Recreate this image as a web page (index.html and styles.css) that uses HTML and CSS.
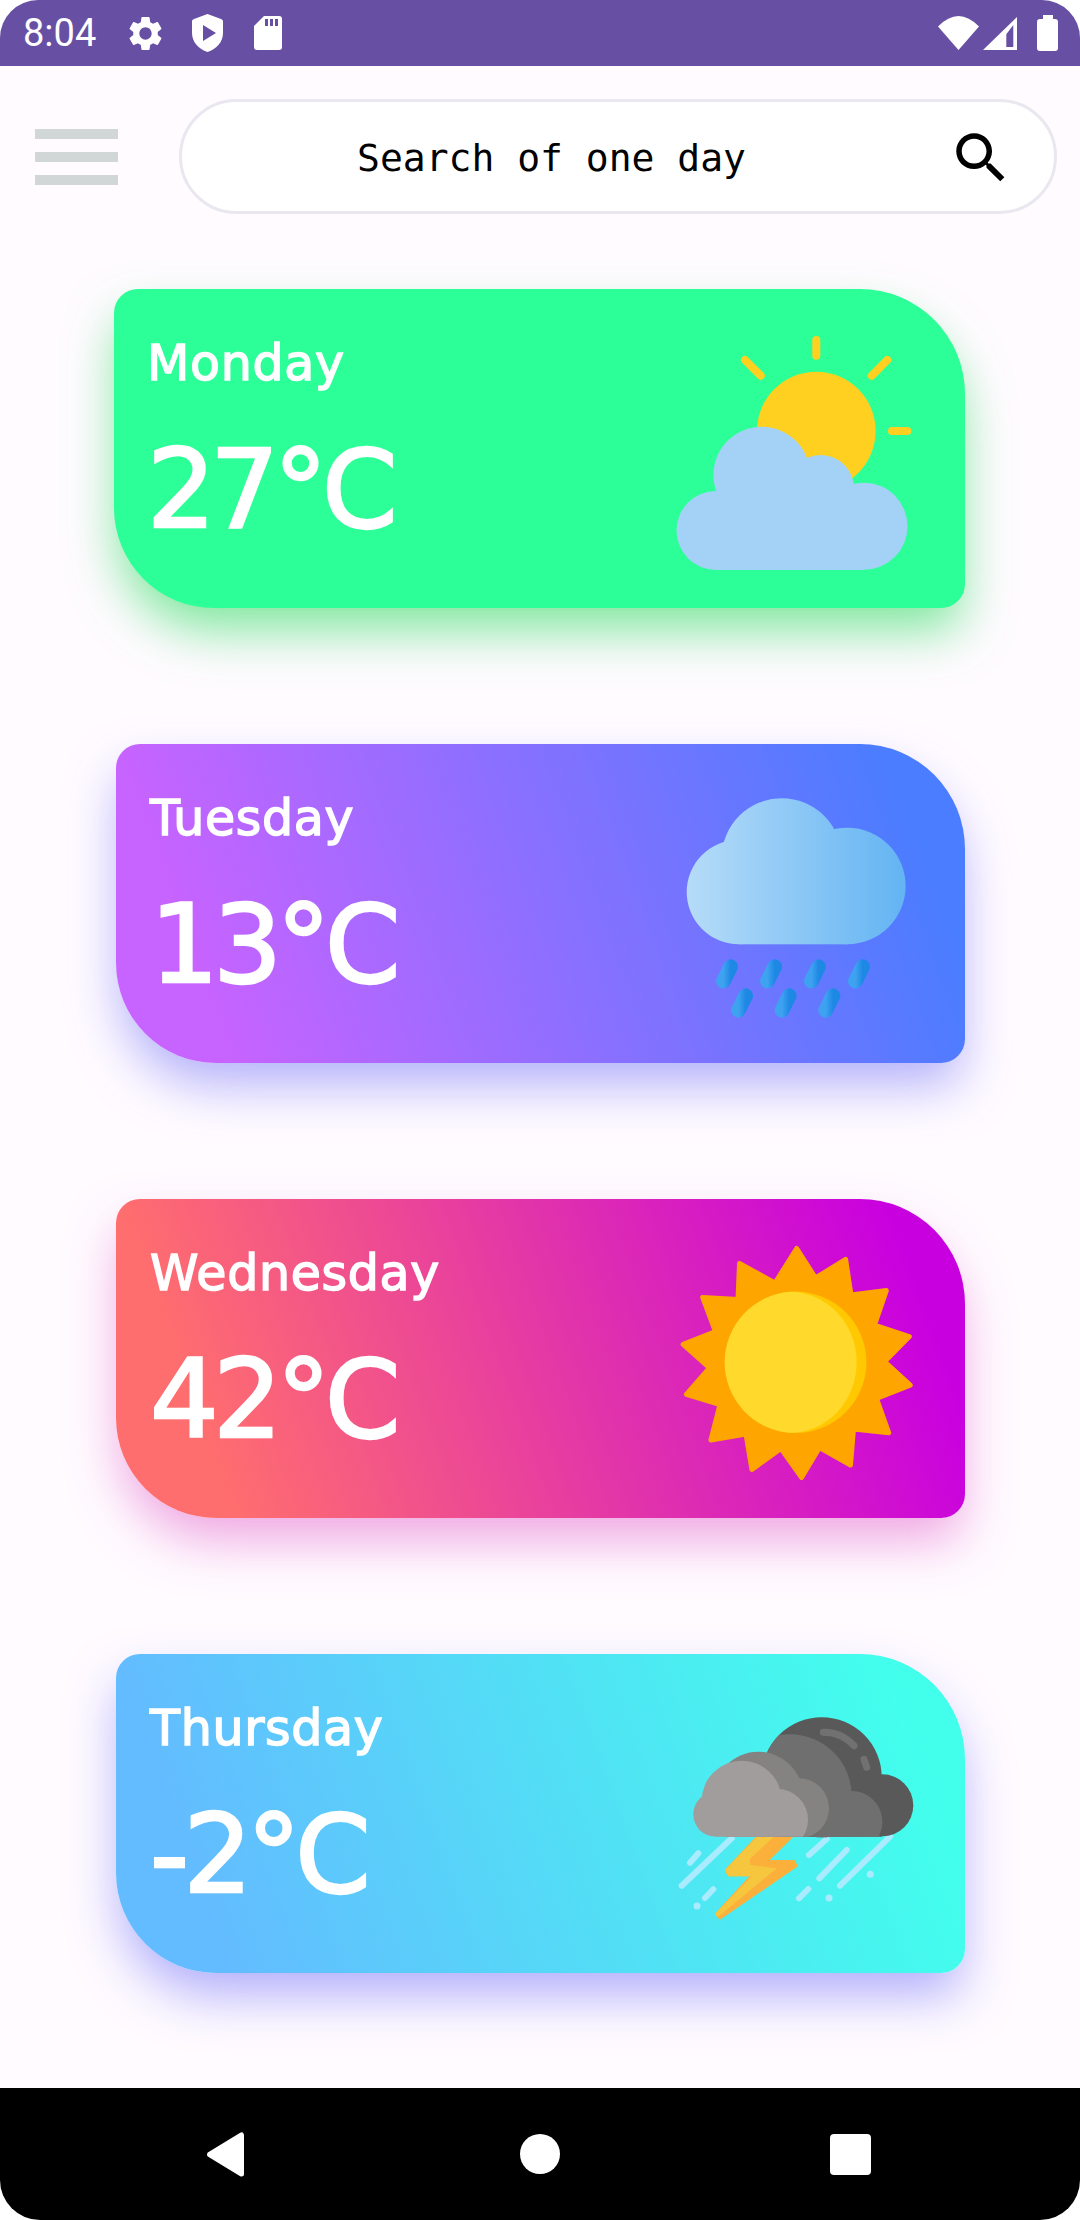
FILE: index.html
```html
<!DOCTYPE html>
<html lang="en">
<head>
  <meta charset="UTF-8">
  <title>Weather</title>
  <link rel="stylesheet" href="styles.css">
</head>
<body>
  <div class="phone">
    <div class="status-bar">
      <span class="clock">8:04</span>
      <svg class="icon-gear" viewBox="0 0 24 24"><path fill="#fff" d="M19.14 12.94c.04-.3.06-.61.06-.94 0-.32-.02-.64-.07-.94l2.03-1.58c.18-.14.23-.41.12-.61l-1.92-3.32c-.12-.22-.37-.29-.59-.22l-2.39.96c-.5-.38-1.03-.7-1.62-.94l-.36-2.54c-.04-.24-.24-.41-.48-.41h-3.84c-.24 0-.43.17-.47.41l-.36 2.54c-.59.24-1.13.57-1.62.94l-2.39-.96c-.22-.08-.47 0-.59.22L2.74 8.87c-.12.21-.08.47.12.61l2.03 1.58c-.05.3-.09.63-.09.94s.02.64.07.94l-2.03 1.58c-.18.14-.23.41-.12.61l1.92 3.32c.12.22.37.29.59.22l2.39-.96c.5.38 1.03.7 1.62.94l.36 2.54c.05.24.24.41.48.41h3.84c.24 0 .44-.17.47-.41l.36-2.54c.59-.24 1.13-.56 1.62-.94l2.39.96c.22.08.47 0 .59-.22l1.92-3.32c.12-.22.07-.47-.12-.61l-2.01-1.58zM12 15.6c-1.98 0-3.6-1.62-3.6-3.6s1.62-3.6 3.6-3.6 3.6 1.62 3.6 3.6-1.62 3.6-3.6 3.6z"/></svg>
      <svg class="icon-shield" viewBox="0 0 31 38"><path fill="#fff" fill-rule="evenodd" d="M15.5 0L29 5c1.300.5 2 1.300 2 2.700V19c0 9-6.500 16-15.500 19C6.500 35 0 28 0 19V7.700C0 6.300.7 5.500 2 5zM11 11v16l13-8z"/></svg>
      <svg class="icon-sd" viewBox="0 0 28 34">
        <path fill="#fff" d="M10 0H25a3 3 0 0 1 3 3V31a3 3 0 0 1-3 3H3a3 3 0 0 1-3-3V10Z"/>
        <path fill="#6750a4" d="M11 3h3v7h-3zM16 3h3v7h-3zM21 3h3v7h-3z"/>
      </svg>
      <div class="status-right">
        <svg class="icon-wifi" viewBox="0 0 41 34"><path fill="#fff" d="M20.500 34L0 10.500Q20.500-10.500 41 10.500Z"/></svg>
        <svg class="icon-signal" viewBox="0 0 34 33"><path fill="#fff" fill-rule="evenodd" d="M34 0V33H0ZM30.300 8L23.300 17.300V30H30.300Z"/></svg>
        <svg class="icon-battery" viewBox="0 0 21 36"><path fill="#fff" d="M6 0H16V4H18a3 3 0 0 1 3 3V33a3 3 0 0 1-3 3H3a3 3 0 0 1-3-3V7a3 3 0 0 1 3-3H6Z"/></svg>
      </div>
    </div>

    <main class="content">
      <header class="top-row">
        <div class="menu">
          <span></span>
          <span></span>
          <span></span>
        </div>
        <div class="search">
          <span class="search-text">Search of one day</span>
          <svg class="icon-search" viewBox="0 0 24 24"><path d="M15.500 14h-.79l-.28-.27C15.410 12.590 16 11.110 16 9.500 16 5.910 13.090 3 9.500 3S3 5.910 3 9.500 5.910 16 9.500 16c1.610 0 3.090-.59 4.230-1.570l.27.28v.79l5 4.990L20.490 19l-4.990-5zm-6 0C7.010 14 5 11.990 5 9.500S7.010 5 9.500 5 14 7.010 14 9.500 11.990 14 9.500 14z"/></svg>
        </div>
      </header>

      <section class="cards">
        <article class="card card-mon">
          <div class="card-text">
            <div class="day">Monday</div>
            <div class="temp">27°C</div>
          </div>
          <svg class="weather" viewBox="0 0 240 240">
            <circle cx="140.300" cy="100" r="59.300" fill="#ffd020"/>
            <g stroke="#ffd020" stroke-width="8" stroke-linecap="round">
              <path d="M140.300 9V24.700M69 29L84.700 44.700M211.300 29L195.700 44.700M216 100H231.300"/>
            </g>
            <g fill="#a3d2f6">
              <circle cx="40" cy="199.500" r="39.500"/>
              <circle cx="188" cy="195.300" r="43.500"/>
              <circle cx="85.700" cy="144" r="48.300"/>
              <circle cx="144.700" cy="157.300" r="33.300"/>
              <rect x="40" y="170" width="148" height="69"/>
            </g>
          </svg>
        </article>

        <article class="card card-tue">
          <div class="card-text">
            <div class="day">Tuesday</div>
            <div class="temp">13°C</div>
          </div>
          <svg class="weather" viewBox="0 0 240 240">
            <defs>
              <linearGradient id="rainCloud" gradientUnits="userSpaceOnUse" x1="10" y1="0" x2="230" y2="0">
                <stop offset="0" stop-color="#b6dcf8"/>
                <stop offset="1" stop-color="#63b4f3"/>
              </linearGradient>
              <linearGradient id="drop" x1="0" y1="0" x2="1" y2="0">
                <stop offset="0" stop-color="#3ea2f0"/>
                <stop offset="1" stop-color="#1e88e5"/>
              </linearGradient>
            </defs>
            <g fill="url(#rainCloud)">
              <circle cx="105.700" cy="72.300" r="60"/>
              <circle cx="171.300" cy="100" r="58.300"/>
              <circle cx="63" cy="106" r="52.300"/>
              <rect x="63" y="90" width="108.300" height="68.300"/>
            </g>
            <g fill="none" stroke="url(#drop)" stroke-width="14.700" stroke-linecap="round">
              <path d="M54.700 180.700L47.400 195.100"/>
              <path d="M98.700 180.700L91.400 195.100"/>
              <path d="M142.700 180.700L135.400 195.100"/>
              <path d="M186.700 180.700L179.400 195.100"/>
              <path d="M69.700 209.700L62.400 224.300"/>
              <path d="M113.300 209.700L106 224.300"/>
              <path d="M157 209.700L149.700 224.300"/>
            </g>
          </svg>
        </article>

        <article class="card card-wed">
          <div class="card-text">
            <div class="day">Wednesday</div>
            <div class="temp">42°C</div>
          </div>
          <svg class="weather" viewBox="0 0 240 240">
            <polygon fill="#ffa500" stroke="#ffa500" stroke-width="5" stroke-linejoin="round" points="120.700,7.500 139.500,37 169.600,18.500 175,54 210.300,49.600 198.500,84 233.300,95.600 208.500,120.700 234.200,144.200 200.500,157.500 212.700,191.800 177.500,188 174.500,224.100 143.500,206.500 125.600,236.500 105,207.500 75.900,228.400 70,193 34.900,199 44,163.500 10.400,153.300 33.500,127 7.200,103.400 39.500,90.500 26.700,56.400 62,58.500 63.500,22.500 99,42"/>
            <circle cx="119.700" cy="121.300" r="70.700" fill="#ffc800"/>
            <path fill="#ffd92b" d="M114 50.800A70.700 70.700 0 0 0 114 191.800A66.700 70.500 0 0 0 114 50.800Z"/>
          </svg>
        </article>

        <article class="card card-thu">
          <div class="card-text">
            <div class="day">Thursday</div>
            <div class="temp">-2°C</div>
          </div>
          <svg class="weather" viewBox="0 0 240 240">
            <defs>
              <clipPath id="cloudBottom"><rect x="0" y="0" width="240" height="140.700"/></clipPath>
              <clipPath id="darkCloud">
                <circle cx="145.700" cy="81.300" r="60"/>
                <circle cx="206.300" cy="109.300" r="31"/>
                <rect x="30" y="90" width="176" height="50.700"/>
              </clipPath>
            </defs>
            <g fill="none" stroke="#a9ebff" stroke-width="6" stroke-linecap="round">
              <path d="M55.700 142.300L5.700 189.700M22.300 157.300L14 166.700M37.300 193.300L29 202"/>
              <path d="M150.700 143L133 159M170.700 154L143.300 182.300M214 140.700L164 189.700M132.300 193L123 202.300"/>
            </g>
            <g fill="#a9ebff">
              <circle cx="21" cy="210" r="3.500"/>
              <circle cx="153" cy="202" r="3.500"/>
              <circle cx="194.300" cy="178.300" r="3.500"/>
            </g>
            <polygon fill="#fbb03b" stroke="#fbb03b" stroke-width="2" stroke-linejoin="round" points="81,141 115.700,141 91.300,165 118,165 120.700,170 44,222.500 40,218 75.700,179.300 52.300,179.300 50,174"/>
            <polygon fill="#f7c63f" points="80.700,141 97.300,141 74,163 74,169 100.700,172.300 42,221 39,218 75.700,180.300 52.300,180.300 49,174"/>
            <g fill="#595959">
              <circle cx="145.700" cy="81.300" r="60"/>
              <circle cx="206.300" cy="109.300" r="31"/>
              <rect x="100" y="100" width="106" height="40.700"/>
            </g>
            <g clip-path="url(#darkCloud)">
              <g fill="#6f6f6f">
                <circle cx="114" cy="100" r="61.700"/>
                <circle cx="175.700" cy="125.700" r="30.700"/>
                <rect x="60" y="110" width="116" height="31"/>
              </g>
            </g>
            <path fill="none" stroke="#717171" stroke-width="7" stroke-linecap="round" d="M147.300 36.300Q165 36 178 49.700M188 63.300L190.700 71.300"/>
            <g clip-path="url(#cloudBottom)">
              <g fill="#858381">
                <circle cx="82.300" cy="100.700" r="45"/>
                <circle cx="123" cy="112.300" r="30"/>
                <rect x="50" y="112" width="73" height="29"/>
              </g>
              <g fill="#a19d9c">
                <circle cx="39.700" cy="118.300" r="22.400"/>
                <circle cx="65.700" cy="104.700" r="40"/>
                <circle cx="101.300" cy="123.700" r="30.700"/>
                <rect x="39.700" y="118" width="61.600" height="23"/>
              </g>
            </g>
          </svg>
        </article>
      </section>
    </main>

    <nav class="nav-bar">
      <svg class="nav-back" viewBox="0 0 37 45"><polygon fill="#fff" stroke="#fff" stroke-width="5" stroke-linejoin="round" points="2.500,22.500 34.500,3 34.500,42"/></svg>
      <span class="nav-home"></span>
      <span class="nav-recent"></span>
    </nav>
  </div>
</body>
</html>
```

FILE: styles.css
```css
* {
  box-sizing: border-box;
}

html,
body {
  margin: 0;
  padding: 0;
  background: #fff;
}

.phone {
  width: 1080px;
  height: 2220px;
  display: flex;
  flex-direction: column;
  overflow: hidden;
}

/* status bar */
.status-bar {
  height: 66px;
  flex-shrink: 0;
  display: flex;
  align-items: center;
  padding: 0 22px 0 23px;
  background: #6750a4;
  border-radius: 38px 38px 0 0;
}

.clock {
  width: 73px;
  color: #fff;
  font: 400 38px/44px Roboto, sans-serif;
}

.icon-gear {
  width: 41px;
  height: 41px;
  margin-left: 29px;
}

.icon-shield {
  width: 31px;
  height: 38px;
  margin-left: 26px;
}

.icon-sd {
  width: 28px;
  height: 34px;
  margin-left: 31px;
}

.status-right {
  margin-left: auto;
  display: flex;
  align-items: center;
}

.icon-wifi {
  width: 41px;
  height: 34px;
}

.icon-signal {
  width: 34px;
  height: 33px;
  margin-left: 4px;
}

.icon-battery {
  width: 21px;
  height: 36px;
  margin-left: 20px;
}

/* main */
.content {
  flex: 1;
  background: #fffbff;
}

.top-row {
  display: flex;
  align-items: center;
  padding: 33px 0 0 35px;
}

.menu {
  width: 83px;
  display: flex;
  flex-direction: column;
  gap: 13px;
}

.menu span {
  height: 10px;
  background: #d0d7d6;
}

.search {
  width: 878px;
  height: 115px;
  margin-left: 61px;
  display: flex;
  align-items: center;
  justify-content: space-between;
  padding: 0 40px 0 175px;
  background: #fff;
  border: 3px solid #e9e7ef;
  border-radius: 58px;
}

.search-text {
  margin-top: 3px;
  color: #000;
  font: 400 38px/46px "DejaVu Sans Mono", monospace;
}

.icon-search {
  width: 66px;
  height: 66px;
  margin-top: 3px;
}

/* cards */
.cards {
  display: flex;
  flex-direction: column;
  gap: 136px;
  margin-top: 75px;
}

.card {
  width: 849px;
  height: 319px;
  margin-left: 116px;
  display: flex;
  justify-content: space-between;
  padding: 45px 49px 0 34px;
  border-radius: 24px 105px 24px 100px;
  color: #fff;
  font-family: "DejaVu Sans", sans-serif;
}

.card-mon {
  width: 851px;
  margin-left: 114px;
  padding-left: 33px;
  background: #2cff97;
  box-shadow: 0 26px 50px -4px rgba(90, 225, 130, 0.78);
}

.card-tue {
  background: linear-gradient(70deg, #c763ff 12%, #4a7dff 92%);
  box-shadow: 0 26px 50px -4px rgba(110, 110, 245, 0.52);
}

.card-wed {
  background: linear-gradient(70deg, #ff6e6e 12%, #c800e0 92%);
  box-shadow: 0 26px 50px -4px rgba(225, 90, 200, 0.52);
}

.card-thu {
  background: linear-gradient(70deg, #63bcff 12%, #42ffec 92%);
  box-shadow: 0 26px 50px -4px rgba(100, 100, 250, 0.5);
}

.day {
  font-size: 49px;
  line-height: 60px;
  letter-spacing: 0.7px;
  -webkit-text-stroke: 1.5px #fff;
}

.temp {
  margin-top: 31px;
  font-size: 108px;
  line-height: 130px;
  letter-spacing: -5.5px;
  -webkit-text-stroke: 2.5px #fff;
}

.weather {
  width: 240px;
  height: 240px;
  flex-shrink: 0;
  margin-top: -3px;
}

/* nav bar */
.nav-bar {
  height: 132px;
  flex-shrink: 0;
  display: flex;
  align-items: center;
  padding-left: 207px;
  background: #000;
  border-radius: 0 0 40px 40px;
}

.nav-back {
  width: 37px;
  height: 45px;
}

.nav-home {
  width: 40px;
  height: 40px;
  margin-left: 276px;
  background: #fff;
  border-radius: 50%;
}

.nav-recent {
  width: 41px;
  height: 41px;
  margin-left: 270px;
  background: #fff;
  border-radius: 4px;
}
```
